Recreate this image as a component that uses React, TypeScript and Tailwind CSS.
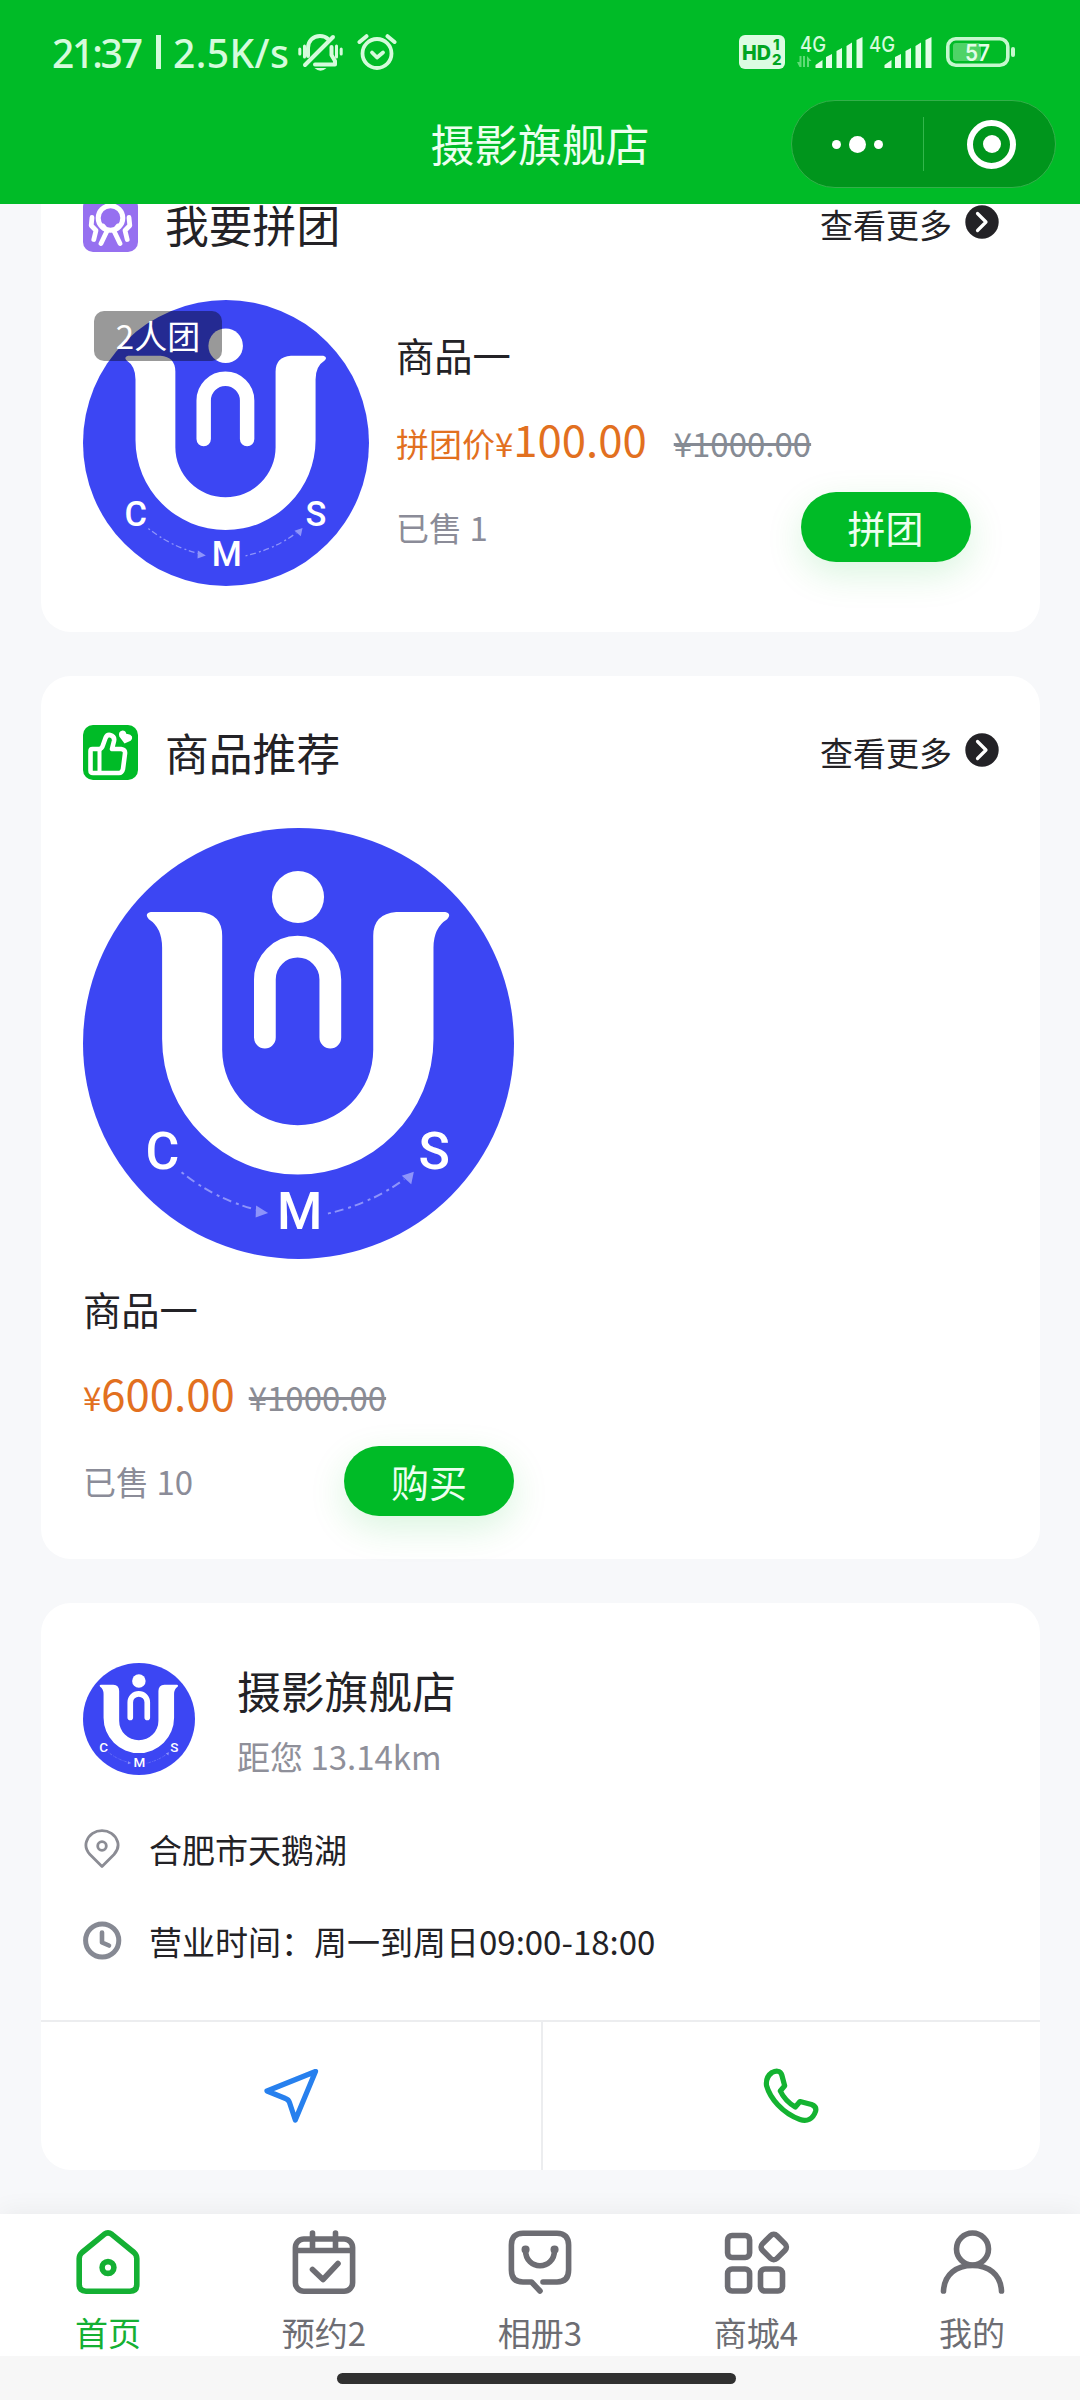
import React from "react";

function Logo({ className }: { className: string }) {
  return (
    <svg viewBox="0 0 432 432" className={className}>
      <circle cx="216" cy="216" r="216" fill="#3c46f3" />
      <circle cx="215.5" cy="69.2" r="26.1" fill="#fff" />
      <path d="M182.3 210V151.8a32.8 32.8 0 0 1 65.6 0V210" fill="none" stroke="#fff" strokeWidth="21.8" strokeLinecap="round" />
      <path
        d="M68 84.2H117Q139.5 86 139.5 108V222.3a75.7 75.7 0 0 0 151.4 0V108Q291 86 314 84.2H363Q370 86 365 91.5Q351.3 100 351.3 120V211.4a136 136 0 0 1-272 0V120Q79.300 100 66 91.500Q61 86 68 84.200Z"
        fill="#fff"
      />
      <g fill="#fff" fontFamily="Roboto, sans-serif" fontWeight="500" fontSize="52" textAnchor="middle">
        <text x="79.500" y="341.500">C</text>
        <text x="217.300" y="402">M</text>
        <text x="352" y="341.500">S</text>
      </g>
      <g fill="none" stroke="#8e94fa" strokeWidth="2" strokeDasharray="3 4 9 5">
        <path d="M98.800 345Q132 372 175 383" />
        <path d="M245.500 386.500Q290 376 322 352" />
      </g>
      <path d="M185.500 386L173.500 378.500L173 390.500Z" fill="#8e94fa" />
      <path d="M331.600 344.500L319.500 348.500L329 357Z" fill="#8e94fa" />
    </svg>
  );
}

function BellOff() {
  return (
    <svg viewBox="0 0 46 38" className="ml-[6px] h-[38px] w-[46px]" fill="none" stroke="#d5fbdc" strokeLinecap="round">
      <path d="M10 23V15C10 8 15 3 22 3C25 3 28 4 30 6" strokeWidth="4" />
      <path d="M33.500 14V22L37 28V31.500H17" strokeWidth="4" strokeLinejoin="round" />
      <path d="M35 4L7 32" strokeWidth="4" />
      <path d="M6.500 13V24M1.800 16V21M38.500 13V24M43.200 16V21" strokeWidth="3" />
      <path d="M16.500 35H28.500Q22.500 40.500 16.500 35Z" fill="#d5fbdc" stroke="none" />
    </svg>
  );
}

function Alarm() {
  return (
    <svg viewBox="0 0 40 38" className="ml-[13px] h-[38px] w-[40px]" fill="none" stroke="#d5fbdc" strokeLinecap="round" strokeLinejoin="round">
      <circle cx="20" cy="20.500" r="14.500" strokeWidth="3.800" />
      <path d="M2.500 9L9.500 3.200M37.500 9L30.500 3.200" strokeWidth="4" />
      <path d="M15 19.500L20 24.500L26 19.500" strokeWidth="3.800" />
    </svg>
  );
}

function Signal({ traffic = false }: { traffic?: boolean }) {
  return (
    <svg viewBox="0 0 69 38" className="h-[38px] w-[69px] overflow-visible">
      <text x="4" y="18.500" fill="#d5fbdc" fontFamily="Inter, sans-serif" fontSize="22" fontWeight="500" textLength="26" lengthAdjust="spacingAndGlyphs">
        4G
      </text>
      {traffic && <path d="M5.500 23V34H3.500L1 29H3.500V23ZM7 34V23H9V34ZM11 34V23L15.500 28H13V34Z" fill="#5fdc76" />}
      <g fill="#e3fde8">
        <path d="M19.500 32L26.500 27V35H19.500Z" />
        <path d="M30 24L36 21V35H30Z" />
        <path d="M40.500 18L46 15V35H40.500Z" />
        <path d="M50.500 13L56 9.500V35H50.500Z" />
        <path d="M60.500 7L66.500 4V35H60.500Z" />
      </g>
    </svg>
  );
}

function StatusBar() {
  return (
    <div className="flex h-[100px] items-center pl-[52px] pr-[64px] pt-[4px]">
      <div className="flex w-[240px] items-center whitespace-nowrap font-['Noto_Sans','Noto_Sans_CJK_SC',sans-serif] text-[39px] font-medium leading-none text-[#d5fbdc]">
        <span className="w-[104px] tracking-[-2.2px]">21:37</span>
        <i className="h-[34px] w-[5px] bg-[#d5fbdc]" />
        <span className="ml-[12px] tracking-[0.4px]">2.5K/s</span>
      </div>
      <BellOff />
      <Alarm />
      <svg viewBox="0 0 46 34" className="ml-auto h-[34px] w-[46px]" fontFamily="Inter, sans-serif" fontWeight="800" fill="#00a522">
        <rect width="46" height="34" rx="6" fill="#dcfce2" />
        <text x="3" y="24.500" fontSize="20.500" textLength="29" lengthAdjust="spacingAndGlyphs">HD</text>
        <text x="34" y="15" fontSize="15" textLength="8">1</text>
        <text x="33" y="30" fontSize="15">2</text>
      </svg>
      <span className="ml-[11px] flex">
        <Signal traffic />
        <Signal />
      </span>
      <svg viewBox="0 0 70 30" className="ml-[12px] h-[30px] w-[70px]">
        <rect x="1.800" y="1.800" width="60" height="26.400" rx="8" fill="none" stroke="#c5f8ce" strokeWidth="3.600" />
        <rect x="7" y="6" width="28" height="18" rx="3" fill="#4fd367" />
        <rect x="65" y="10" width="4" height="10" rx="2" fill="#c5f8ce" />
        <text x="31.500" y="23.500" textAnchor="middle" fontFamily="Inter, sans-serif" fontWeight="600" fontSize="23" fill="#e3fde8" textLength="25" lengthAdjust="spacingAndGlyphs">
          57
        </text>
      </svg>
    </div>
  );
}

function Header() {
  return (
    <header className="relative h-[204px] bg-[#00bb27]">
      <StatusBar />
      <h1 className="pt-[21px] text-center text-[43.800px] leading-[44px] text-[#edfff0]">摄影旗舰店</h1>
      <div className="absolute left-[791px] top-[100px] flex h-[88px] w-[265px] items-center rounded-full border border-[#33b04a] bg-[#00951c]">
        <div className="flex w-[131px] items-center justify-center gap-[8px] pr-px">
          <i className="size-[9px] rounded-full bg-white" />
          <i className="size-[17px] rounded-full bg-white" />
          <i className="size-[9px] rounded-full bg-white" />
        </div>
        <div className="h-[54px] w-px bg-[#33b64c]" />
        <div className="ml-[43px] flex size-[49px] items-center justify-center rounded-full border-[6px] border-white">
          <i className="size-[18px] rounded-full bg-white" />
        </div>
      </div>
    </header>
  );
}

function GroupIcon() {
  return (
    <svg viewBox="0 0 55 55" className="size-[55px]" fill="none" stroke="#fff" strokeLinecap="round" strokeLinejoin="round">
      <rect width="55" height="55" rx="10" fill="#9670f0" stroke="none" />
      <circle cx="27.500" cy="21" r="12.300" strokeWidth="5" />
      <path d="M20 29L24 34L18 46.500M35 29L31 34L37 46.500" strokeWidth="4.800" />
      <path d="M9 20.500L8.200 28.500L13 33.500L10.800 42.500M46 20.500L46.800 28.500L42 33.500L44.200 42.500" strokeWidth="4.800" />
    </svg>
  );
}

function ThumbIcon() {
  return (
    <svg viewBox="0 0 55 55" className="size-[55px]" fill="none" stroke="#fff" strokeLinecap="round" strokeLinejoin="round">
      <rect width="55" height="55" rx="10" fill="#00bb27" stroke="none" />
      <path
        d="M7.500 26Q7.500 24 9.500 24H16Q19 24 20 20L22.500 13Q24 9.500 27 10Q32 11.500 31 16L29 24H38Q42.500 24.500 42 28.500L40 44Q39 48 36 48H10Q7.500 48 7.500 45.500Z"
        strokeWidth="4.600"
      />
      <path d="M16.500 25V47" strokeWidth="4" />
      <path d="M41.500 18.500L36.300 11.500Q34.800 6.500 39.500 5.600Q42.500 5.600 43.500 9Q47.500 8.500 49 11.500Q49.800 15 46 16.500Z" fill="#fff" stroke="none" />
    </svg>
  );
}

function SectionHead({ icon, title }: { icon: React.ReactNode; title: string }) {
  return (
    <div className="-mr-[2px] flex h-[55px] items-center">
      {icon}
      <h2 className="ml-[27px] text-[43.800px] leading-none">{title}</h2>
      <span className="ml-auto text-[33px] leading-none">查看更多</span>
      <svg viewBox="0 0 34 34" className="mb-[5px] ml-[13px] size-[34px]" fill="none">
        <circle cx="17" cy="17" r="16.700" fill="#232226" />
        <path d="M12.500 8.500L21 17L12.500 25.500" stroke="#fff" strokeWidth="3.200" strokeLinecap="round" strokeLinejoin="round" />
      </svg>
    </div>
  );
}

function Pill({ children }: { children: string }) {
  return (
    <button className="h-[70px] w-[170px] rounded-full bg-[#00bb27] text-[38px] leading-none text-[#edfff0] shadow-[0_12px_36px_rgba(0,187,39,0.15)]">
      {children}
    </button>
  );
}

function GroupCard() {
  return (
    <section className="-mt-[56px] h-[484px] rounded-[30px] bg-white px-[42.500px] pt-[49px]">
      <SectionHead icon={<GroupIcon />} title="我要拼团" />
      <div className="mt-[48px] flex">
        <div className="relative size-[286px]">
          <Logo className="size-[286px]" />
          <span className="absolute left-[11px] top-[11px] flex h-[50px] w-[128px] items-center justify-center rounded-[10px] bg-black/40 text-[33px] text-white">
            2人团
          </span>
        </div>
        <div className="ml-[27px] flex-1 pr-[26.500px]">
          <h3 className="mt-[36px] text-[38.300px] leading-[38px]">商品一</h3>
          <p className="mt-[33px] flex h-[62px] items-baseline text-[33px] leading-[62px] text-[#e2701f]">
            拼团价¥<span className="text-[43.700px]">100.00</span>
            <s className="ml-[27px] text-[#868b94]">¥1000.00</s>
          </p>
          <div className="mt-[23px] flex items-center justify-between">
            <span className="text-[33px] leading-none text-[#8b8c98]">已售 1</span>
            <Pill>拼团</Pill>
          </div>
        </div>
      </div>
    </section>
  );
}

function ProductCard() {
  return (
    <section className="h-[883px] rounded-[30px] bg-white px-[42.500px] pt-[49px]">
      <SectionHead icon={<ThumbIcon />} title="商品推荐" />
      <div className="mt-[48px] w-[431px]">
        <Logo className="size-[431px]" />
        <h3 className="mt-[31px] text-[38.300px] leading-[38px]">商品一</h3>
        <p className="mt-[33px] flex h-[62px] items-baseline text-[33px] leading-[62px] text-[#e2701f]">
          ¥<span className="text-[43.700px]">600.00</span>
          <s className="ml-[14px] text-[#8b8c94]">¥1000.00</s>
        </p>
        <div className="mt-[23px] flex items-center justify-between">
          <span className="text-[33px] leading-none text-[#8b8c98]">已售 10</span>
          <Pill>购买</Pill>
        </div>
      </div>
    </section>
  );
}

function StoreCard() {
  return (
    <section className="flex h-[567px] flex-col overflow-hidden rounded-[30px] bg-white">
      <div className="flex h-[417px] flex-col px-[42.500px] pt-[60px]">
        <div className="flex">
          <Logo className="size-[112px]" />
          <div className="ml-[42px]">
            <h2 className="mt-[5px] text-[43.800px] leading-[44px]">摄影旗舰店</h2>
            <p className="mt-[28px] text-[33px] leading-[33px] text-[#8f909a]">距您 13.14km</p>
          </div>
        </div>
        <div className="mt-[50px] flex h-[48px] items-center">
          <svg viewBox="0 0 40 40" className="size-[40px]" fill="none" stroke="#8b8c94" strokeWidth="2.800">
            <path d="M19 37.500L7 25.500C3 21 2 17 3.500 12.500C8 -2 30 -2 34.500 12.500C36 17 35 21 31 25.500Z" strokeLinejoin="round" />
            <circle cx="19" cy="17" r="4.300" />
          </svg>
          <span className="ml-[26px] text-[33px] leading-none">合肥市天鹅湖</span>
        </div>
        <div className="mt-[44px] flex h-[48px] items-center">
          <svg viewBox="0 0 40 40" className="size-[40px]" fill="none" stroke="#868993" strokeLinecap="round" strokeLinejoin="round">
            <circle cx="19.200" cy="19.500" r="16.600" strokeWidth="5" />
            <path d="M19 11.500V21.500L26 24.500" strokeWidth="4.600" />
          </svg>
          <span className="ml-[26px] text-[33px] leading-none">营业时间：周一到周日09:00-18:00</span>
        </div>
      </div>
      <div className="flex flex-1 border-t-2 border-[#ecedef]">
        <div className="flex w-[502px] items-center justify-center border-r-2 border-[#ecedef]">
          <svg viewBox="0 0 56 56" className="size-[56px]" fill="none" stroke="#2780ee" strokeWidth="5.200" strokeLinejoin="round">
            <path d="M52.500 3.500L4 23L22.500 30.500Q25.500 31.500 26.500 34.500L32.300 52Z" />
          </svg>
        </div>
        <div className="flex flex-1 items-center justify-center">
          <svg viewBox="0 0 56 56" className="size-[56px]" fill="none" stroke="#14b331" strokeWidth="5.200" strokeLinejoin="round">
            <path d="M9 4.500C12 3 17.500 1.800 18.800 7L21.700 17.800L17.300 23Q22 33 32.300 39L37 33.500L48.500 36.500Q54 38.500 52.500 43.500C50 51 44 54 37 51.500C19 45 7 30 3.500 17.500Q2.500 9 9 4.500Z" />
          </svg>
        </div>
      </div>
    </section>
  );
}

const tabs: { label: string; icon: React.ReactNode }[] = [
  {
    label: "首页",
    icon: (
      <>
        <path d="M28.200 4.300Q32 1.500 35.800 4.300L58 22.500Q60.800 25 60.800 28.500V54.500Q60.800 61.200 54 61.200H10Q3.200 61.200 3.200 54.500V28.500Q3.200 25 6 22.500Z" />
        <circle cx="32" cy="37.500" r="5.900" />
      </>
    ),
  },
  {
    label: "预约2",
    icon: (
      <>
        <rect x="3.400" y="9" width="57.200" height="52.200" rx="8.500" />
        <path d="M4 20.500H60M20.500 3V20M43.500 3V20M20.500 39.500L31 49.500L46 33.500" />
      </>
    ),
  },
  {
    label: "相册3",
    icon: (
      <>
        <path d="M35 52H49Q60.600 52 60.600 40V15Q60.600 3.200 49 3.200H15Q3.400 3.200 3.400 15V40Q3.400 52 15 52H23.500L32 61" />
        <path d="M17.500 20C17.500 41 46.500 41 46.500 20" />
        <path d="M17.500 19.500H17.600M46.500 19.500H46.600" strokeWidth="8" />
      </>
    ),
  },
  {
    label: "商城4",
    icon: (
      <>
        <rect x="3.600" y="5.500" width="22" height="22" rx="4.500" />
        <rect x="3.600" y="39" width="22" height="22" rx="4.500" />
        <rect x="36.500" y="39" width="22" height="22" rx="4.500" />
        <rect x="39.500" y="6.800" width="20.500" height="20.500" rx="4.500" transform="rotate(45 49.750 17.050)" />
      </>
    ),
  },
  {
    label: "我的",
    icon: (
      <>
        <circle cx="32.500" cy="19" r="16" />
        <path d="M3.500 61C4.500 44 16.500 35.500 32.500 35.500S60.500 44 61.500 61" />
      </>
    ),
  },
];

function TabBar() {
  return (
    <nav className="relative flex h-[142px] bg-white pt-[16px] shadow-[0_-2px_24px_rgba(0,0,0,0.06)]">
      {tabs.map((tab, i) => (
        <div key={tab.label} className={`flex flex-1 flex-col items-center ${i === 0 ? "text-[#14b033]" : "text-[#6d6d73]"}`}>
          <svg viewBox="0 0 64 64" className="size-[64px] overflow-visible" fill="none" stroke="currentColor" strokeWidth="5.600" strokeLinecap="round" strokeLinejoin="round">
            {tab.icon}
          </svg>
          <span className="mt-[22px] text-[33px] leading-[33px]">{tab.label}</span>
        </div>
      ))}
    </nav>
  );
}

export default function App() {
  return (
    <div className="flex h-[2400px] w-[1080px] flex-col overflow-hidden bg-[#f7f8fa] font-['Noto_Sans_CJK_SC',sans-serif] text-[#232226]">
      <Header />
      <main className="flex h-[2010px] flex-col gap-[44px] overflow-hidden px-[40.500px]">
        <GroupCard />
        <ProductCard />
        <StoreCard />
      </main>
      <TabBar />
      <div className="relative flex h-[44px] justify-center bg-[#f7f7f7] pt-[17px]">
        <div className="mr-[7px] h-[11px] w-[399px] rounded-full bg-[#303030]" />
      </div>
    </div>
  );
}
